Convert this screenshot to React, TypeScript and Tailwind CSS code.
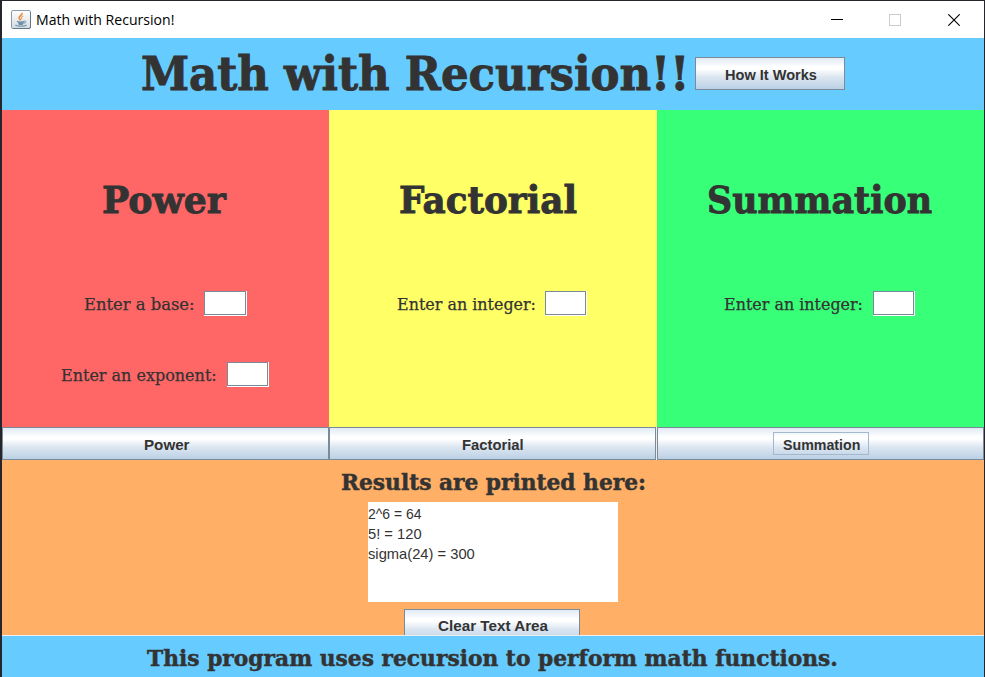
import { useLayoutEffect, useRef, useState } from "react";

const SLAB = "font-['DejaVu_Serif',serif] text-[#333333]";
const HEAVY = "[-webkit-text-stroke:0.9px_#333333]";
const MEDIUM = "[-webkit-text-stroke:0.5px_#333333]";
const LIGHT = "[-webkit-text-stroke:0.25px_#333333]";
const SANS = "font-['Liberation_Sans',sans-serif] text-[#333333]";
const METAL =
  "border border-[#7a8a99] bg-origin-border bg-[linear-gradient(180deg,#dde8f3_0%,#ffffff_30%,#ffffff_36%,#dbe5f0_62%,#b8cfe5_100%)]";

/** Single line of text stretched or squeezed to an exact width. */
function FitText({ text, width, className }: { text: string; width: number; className: string }) {
  const ref = useRef<HTMLSpanElement>(null);
  const [scale, setScale] = useState(1);
  useLayoutEffect(() => {
    if (ref.current) setScale(width / ref.current.offsetWidth);
  }, [width]);
  return (
    <div className="shrink-0" style={{ width }}>
      <div className="w-max origin-left" style={{ transform: `scaleX(${scale})` }}>
        <span ref={ref} className={`block w-max whitespace-pre ${className}`}>
          {text}
        </span>
      </div>
    </div>
  );
}

function MetalField({ className }: { className: string }) {
  return (
    <div className={`h-[25px] shrink-0 bg-white pr-px pb-px ${className}`}>
      <div className="h-full w-full border border-[#7a8a99] bg-white" />
    </div>
  );
}

function JavaIcon() {
  return (
    <svg width="20" height="20" viewBox="0 0 20 20" fill="none">
      <defs>
        <linearGradient id="tile" x1="0" y1="0" x2="0" y2="1">
          <stop offset="0" stopColor="#ffffff" />
          <stop offset="1" stopColor="#d5dadd" />
        </linearGradient>
      </defs>
      <rect x="0.5" y="0.5" width="19" height="18" rx="1.5" fill="url(#tile)" stroke="#8a9cab" />
      <path d="M19.5 2v15q0 1.5-1.5 1.5H2" stroke="#60788c" />
      <path d="M10.7 3c1.4 2-3.2 3-2.6 5 .2.8 1.3 1.5 1.5 2.5" stroke="#e88a3c" strokeWidth="1.6" />
      <path d="M12.3 6c-2 .9-2.5 1.7-1.3 3.2" stroke="#eda468" strokeWidth="1.1" />
      <path d="M5.8 11.2c1.8.8 5.7.8 7.5 0M7 12.9c1.8.6 4 .6 5.8 0M7.6 14.2c1.3.5 3 .5 4.4 0" stroke="#6c91ad" strokeWidth="1.2" />
      <path d="M13.3 11.2c2-.7 2.2 1.6-.2 2.1" stroke="#6c91ad" />
      <path d="M4.5 14.8c1 1.9 9.5 1.8 11 0" stroke="#7899b2" strokeWidth="1.3" />
    </svg>
  );
}

function TitleBar() {
  return (
    <div className="flex h-[37px] shrink-0 items-center bg-white pl-[9px] pr-[24px]">
      <JavaIcon />
      <div className="ml-[5px] pb-0.5">
        <FitText text="Math with Recursion!" width={138} className="font-['Open_Sans',sans-serif] text-[15px] leading-5 text-black" />
      </div>
      <div className="ml-auto flex items-center gap-[46px]">
        <svg className="-ml-px mr-px" width="12" height="12" shapeRendering="crispEdges"><path d="M0 5.5h12" stroke="#000" /></svg>
        <svg className="-ml-px" width="12" height="12" shapeRendering="crispEdges"><rect x="0.5" y="0.5" width="11" height="11" fill="none" stroke="#cccccc" /></svg>
        <svg className="ml-px" width="12" height="12"><path d="M.3.3l11.4 11.4M11.7.3L.3 11.7" stroke="#000" strokeWidth="1.1" /></svg>
      </div>
    </div>
  );
}

export default function App() {
  return (
    <div className="flex h-[677px] w-[985px] flex-col overflow-hidden bg-[#26252b] pt-px pr-px pl-[2px]">
      <TitleBar />

      <header className="flex h-[72px] shrink-0 bg-[#66ccff] pl-[139px]">
        <FitText text="Math with Recursion!!" width={548} className={`${SLAB} ${HEAVY} text-[46px] font-bold leading-[72px]`} />
        <div className={`ml-[6px] mt-[19px] flex h-[33px] w-[150px] justify-center pl-0.5 ${METAL}`}>
          <FitText text="How It Works" width={92} className={`${SANS} text-[15.5px] font-bold leading-[33px]`} />
        </div>
      </header>

      <main className="grid h-[317px] shrink-0 grid-cols-[327px_328px_327px]">
        <section className="bg-[#ff6666]">
          <div className="pl-[100px] pt-[65px]">
            <FitText text="Power" width={124} className={`${SLAB} ${HEAVY} text-[38px] font-bold leading-[50px]`} />
          </div>
          <div className="mt-[66px] flex pl-[82px]">
            <FitText text="Enter a base:" width={110} className={`${SLAB} ${LIGHT} text-[16.5px] leading-[28px]`} />
            <MetalField className="ml-[10px] w-[43px]" />
          </div>
          <div className="mt-[43px] flex pl-[59px]">
            <FitText text="Enter an exponent:" width={156} className={`${SLAB} ${LIGHT} text-[16.5px] leading-[28px]`} />
            <MetalField className="ml-[10px] w-[42px]" />
          </div>
        </section>
        <section className="bg-[#ffff66]">
          <div className="pl-[70px] pt-[65px]">
            <FitText text="Factorial" width={178} className={`${SLAB} ${HEAVY} text-[38px] font-bold leading-[50px]`} />
          </div>
          <div className="mt-[66px] flex pl-[68px]">
            <FitText text="Enter an integer:" width={139} className={`${SLAB} ${LIGHT} text-[16.5px] leading-[28px]`} />
            <MetalField className="ml-[9px] w-[42px]" />
          </div>
        </section>
        <section className="bg-[#38ff78]">
          <div className="pl-[50px] pt-[65px]">
            <FitText text="Summation" width={225} className={`${SLAB} ${HEAVY} text-[38px] font-bold leading-[50px]`} />
          </div>
          <div className="mt-[66px] flex pl-[67px]">
            <FitText text="Enter an integer:" width={139} className={`${SLAB} ${LIGHT} text-[16.5px] leading-[28px]`} />
            <MetalField className="ml-[10px] w-[42px]" />
          </div>
        </section>
      </main>

      <div className="grid h-[33px] shrink-0 grid-cols-[327px_328px_327px] grid-rows-[33px] bg-[#eeeeee]">
        <div className={`flex justify-center pl-[3px] ${METAL}`}>
          <FitText text="Power" width={46} className={`${SANS} text-[15.5px] font-bold leading-[33px]`} />
        </div>
        <div className={`mr-px flex justify-center ${METAL}`}>
          <FitText text="Factorial" width={62} className={`${SANS} text-[15.5px] font-bold leading-[33px]`} />
        </div>
        <div className={`flex justify-center pt-1 ${METAL}`}>
          <div className="flex h-[23px] w-[96px] justify-center border border-[#a3b8cc] pl-px">
            <FitText text="Summation" width={77} className={`${SANS} text-[15.5px] font-bold leading-[23px]`} />
          </div>
        </div>
      </div>

      <section className="flex h-[175px] shrink-0 flex-col overflow-hidden bg-[#ffb066]">
        <div className="pl-[339px] pt-[6px]">
          <FitText text="Results are printed here:" width={305} className={`${SLAB} ${MEDIUM} text-[23px] font-bold leading-[32px]`} />
        </div>
        <div className="ml-[366px] mt-1 h-[100px] w-[250px] shrink-0 bg-white pt-[2px]">
          <FitText text="2^6 = 64" width={54} className={`${SANS} text-[15px] leading-5`} />
          <FitText text="5! = 120" width={54} className={`${SANS} text-[15px] leading-5`} />
          <FitText text="sigma(24) = 300" width={107} className={`${SANS} text-[15px] leading-5`} />
        </div>
        <div className={`ml-[402px] mt-[7px] flex h-[33px] w-[176px] shrink-0 justify-center pl-px ${METAL}`}>
          <FitText text="Clear Text Area" width={110} className={`${SANS} text-[15.5px] font-bold leading-[32px]`} />
        </div>
      </section>

      <footer className="flex h-[42px] shrink-0 border-t border-[#eeeeee] bg-[#66ccff] pl-[145px]">
        <FitText text="This program uses recursion to perform math functions." width={691} className={`${SLAB} ${MEDIUM} pt-[2px] text-[23px] font-bold leading-[40px]`} />
      </footer>
    </div>
  );
}
